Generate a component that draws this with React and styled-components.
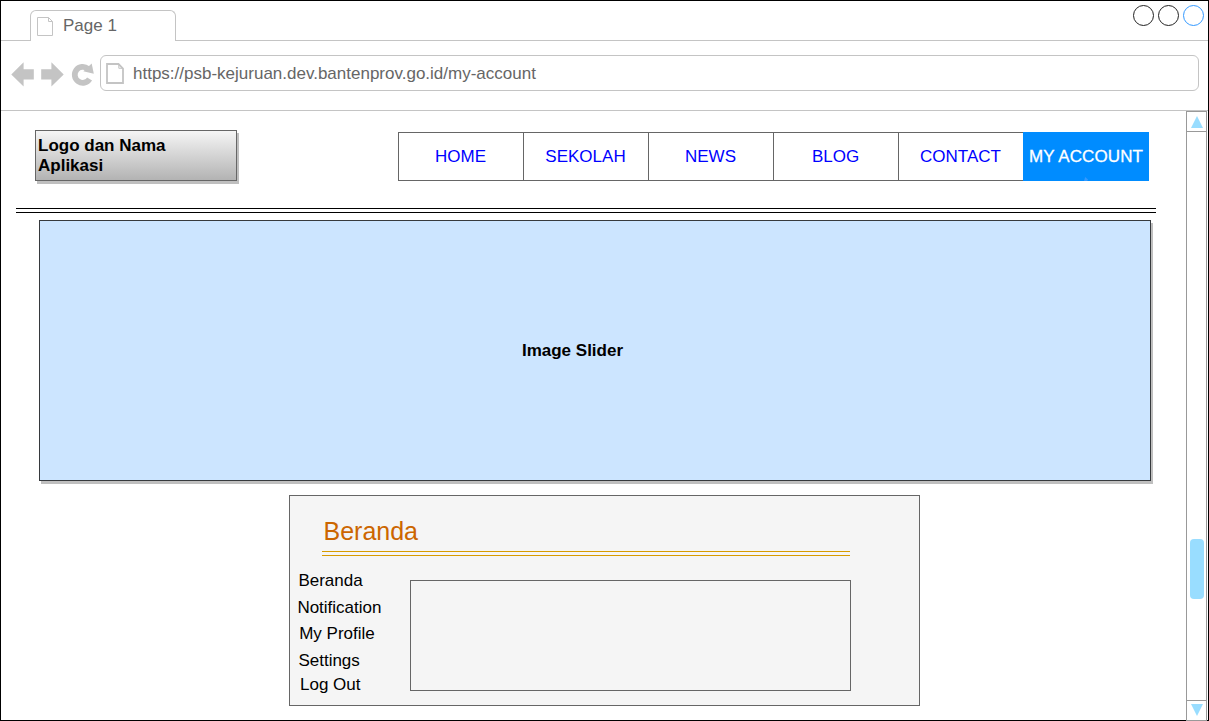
import React from "react";
import styled, { createGlobalStyle } from "styled-components";

const GlobalStyle = createGlobalStyle`
  *, *::before, *::after { box-sizing: border-box; }
  body {
    margin: 0;
    overflow: hidden;
    background: #fff;
    color: #000;
    font: 17px/20px "Liberation Sans", Arial, sans-serif;
  }
`;

const Window = styled.div`
  display: flex;
  flex-direction: column;
  width: 1209px;
  height: 721px;
  border: 1px solid #000;
`;

const TabStrip = styled.div`
  display: flex;
  justify-content: space-between;
  flex: none;
  height: 40px;
  padding: 0 4px 0 29px;
  border-bottom: 1px solid #c4c4c4;
`;

const Tab = styled.div`
  display: flex;
  gap: 9px;
  width: 146px;
  height: 31px;
  margin-top: 9px;
  padding: 5px 0 0 6px;
  border: 1px solid #c4c4c4;
  border-bottom: 0;
  border-radius: 6px 6px 0 0;
  background: #fff;
  color: #666;
`;

const WindowButtons = styled.div`
  display: flex;
  gap: 4px;
  padding-top: 4px;
`;

const Circle = styled.span`
  width: 21px;
  height: 21px;
  border: 1px solid ${(p) => p.$color};
  border-radius: 50%;
`;

const Toolbar = styled.div`
  display: flex;
  flex: none;
  height: 70px;
  padding: 14px 9px 0 9px;
  border-bottom: 1px solid #c4c4c4;
`;

const Icon = styled.svg`
  display: block;
  flex: none;
`;

const AddressBar = styled.div`
  display: flex;
  gap: 8px;
  flex: 1;
  height: 36px;
  padding: 7px 0 0 5px;
  border: 1px solid #c4c4c4;
  border-radius: 6px;
  color: #666;
`;

const Address = styled.span`
  padding-top: 1px;
`;

const Viewport = styled.div`
  display: flex;
  justify-content: space-between;
  flex: 1;
  min-height: 0;
`;

const Page = styled.main`
  width: 1155px;
  padding: 19px 0 0 15px;
`;

const Header = styled.header`
  display: flex;
  justify-content: space-between;
  padding: 0 7px 0 19px;
`;

const Logo = styled.div`
  width: 202px;
  height: 51px;
  padding: 5px 40px 0 2px;
  border: 1px solid #666;
  background: linear-gradient(#f5f5f5, #b3b3b3);
  box-shadow: 2px 3px 0 #bfbfbf;
  font-weight: bold;
`;

const Nav = styled.nav`
  display: flex;
  height: 49px;
  margin-top: 2px;
`;

const NavItem = styled.a`
  display: flex;
  align-items: center;
  justify-content: center;
  width: 125px;
  padding-right: 1px;
  border: 1px solid #666;
  border-right: 0;
  background: #fff;
  color: #0000ff;
  white-space: nowrap;
`;

const ActiveNavItem = styled(NavItem)`
  position: relative;
  width: 126px;
  border-color: #008cff;
  background: #008cff;
  color: #fff;
  letter-spacing: 0.1px;
  -webkit-text-stroke: 0.3px #fff;

  &::after {
    content: "";
    position: absolute;
    bottom: -1px;
    left: 60px;
    width: 4px;
    height: 4px;
    background: #3399ff;
    clip-path: polygon(30% 0, 100% 60%, 80% 100%, 0 100%);
  }
`;

const DoubleRule = styled.div`
  width: ${(p) => p.$width}px;
  height: 5px;
  border: 1px solid ${(p) => p.$color};
  border-width: 1px 0;
`;

const HeaderRule = styled(DoubleRule)`
  margin-top: 27px;
`;

const Slider = styled.section`
  display: flex;
  align-items: center;
  justify-content: center;
  width: 1112px;
  height: 261px;
  margin: 7px 0 0 23px;
  padding-right: 45px;
  border: 1px solid #36393d;
  background: #cce5ff;
  box-shadow: 2px 3px 0 #bfbfbf;
  font-weight: bold;
`;

const Panel = styled.section`
  width: 631px;
  height: 211px;
  margin: 14px 0 0 273px;
  border: 1px solid #666;
  background: #f5f5f5;
`;

const Title = styled.h1`
  margin: 0 0 4px;
  padding: 20px 0 0 33.5px;
  color: #cc6600;
  font-size: 25px;
  font-weight: normal;
  line-height: 31px;
`;

const PanelRule = styled(DoubleRule)`
  margin-left: 32px;
`;

const PanelBody = styled.div`
  display: flex;
`;

const Menu = styled.ul`
  width: 120px;
  margin: 0;
  padding: 15px 0 0;
  list-style: none;
`;

const MenuItem = styled.li`
  height: ${(p) => p.$height}px;
  padding-left: ${(p) => p.$indent}px;
`;

const ContentBox = styled.div`
  width: 441px;
  height: 111px;
  margin-top: 24px;
  border: 1px solid #666;
`;

const Scrollbar = styled.aside`
  display: flex;
  flex-direction: column;
  justify-content: space-between;
  width: 21px;
  height: 610px;
  margin-right: 1px;
  border: 1px solid #999;
`;

const ScrollButton = styled.div`
  display: flex;
  justify-content: center;
  height: 20px;
  padding-top: ${(p) => (p.$down ? 3 : 4)}px;
  border: 0 solid #999;
  border-width: ${(p) => (p.$down ? "1px 0 0" : "0 0 1px")};
`;

const Track = styled.div`
  display: flex;
  justify-content: center;
  flex: 1;
  padding-top: 407px;
`;

const Thumb = styled.div`
  width: 14px;
  height: 60px;
  border-radius: 4px;
  background: #99ddff;
`;

const NAV = ["HOME", "SEKOLAH", "NEWS", "BLOG", "CONTACT"];

const MENU = [
  { label: "Beranda", height: 27, indent: 8.4 },
  { label: "Notification", height: 26, indent: 7.4 },
  { label: "My Profile", height: 27, indent: 9.2 },
  { label: "Settings", height: 24, indent: 8.4 },
  { label: "Log Out", height: 20, indent: 10 },
];

export default function App() {
  return (
    <>
      <GlobalStyle />
      <Window>
        <TabStrip>
          <Tab>
            <Icon width="17" height="20" viewBox="0 0 17 20" fill="none" stroke="#c4c4c4">
              <path d="M.5 1.5H11.5L15.5 5.5V19.5H.5ZM11.5 1.5V5.5H15.5" />
            </Icon>
            Page 1
          </Tab>
          <WindowButtons>
            <Circle $color="#222" />
            <Circle $color="#222" />
            <Circle $color="#3399ff" />
          </WindowButtons>
        </TabStrip>
        <Toolbar>
          <Icon width="90" height="40" viewBox="10 55 90 40" fill="#c4c4c4">
            <path d="M11.3 74.4 23.6 62.3V69.3H33.8V79.4H23.6V86.5Z" />
            <path d="M63.7 74.4 51.4 62.3V69.3H41.2V79.4H51.4V86.5Z" />
            <path
              d="M89.6 79A8 8 0 1 1 87.9 68.7"
              fill="none"
              stroke="#c4c4c4"
              strokeWidth="5.8"
            />
            <path d="M91.7 63.5 93.8 73.7 83.3 71.2Z" />
          </Icon>
          <AddressBar>
            <Icon width="19" height="22" viewBox="0 0 19 22" fill="none" stroke="#c4c4c4" strokeWidth="1.8">
              <path d="M1 1H12.5L17 5.5V20H1Z" />
              <path d="M12.8 1V5.3H17" strokeWidth="1" />
            </Icon>
            <Address>https://psb-kejuruan.dev.bantenprov.go.id/my-account</Address>
          </AddressBar>
        </Toolbar>
        <Viewport>
          <Page>
            <Header>
              <Logo>Logo dan Nama Aplikasi</Logo>
              <Nav>
                {NAV.map((label) => (
                  <NavItem key={label}>{label}</NavItem>
                ))}
                <ActiveNavItem>MY ACCOUNT</ActiveNavItem>
              </Nav>
            </Header>
            <HeaderRule $width={1140} $color="#000" />
            <Slider>Image Slider</Slider>
            <Panel>
              <Title>Beranda</Title>
              <PanelRule $width={528} $color="#d79b00" />
              <PanelBody>
                <Menu>
                  {MENU.map((m) => (
                    <MenuItem key={m.label} $height={m.height} $indent={m.indent}>
                      {m.label}
                    </MenuItem>
                  ))}
                </Menu>
                <ContentBox />
              </PanelBody>
            </Panel>
          </Page>
          <Scrollbar>
            <ScrollButton>
              <Icon width="12" height="12" viewBox="0 0 12 12" fill="#99ddff">
                <path d="M6 0 12 12H0Z" />
              </Icon>
            </ScrollButton>
            <Track>
              <Thumb />
            </Track>
            <ScrollButton $down>
              <Icon width="12" height="12" viewBox="0 0 12 12" fill="#99ddff">
                <path d="M0 0H12L6 12Z" />
              </Icon>
            </ScrollButton>
          </Scrollbar>
        </Viewport>
      </Window>
    </>
  );
}
